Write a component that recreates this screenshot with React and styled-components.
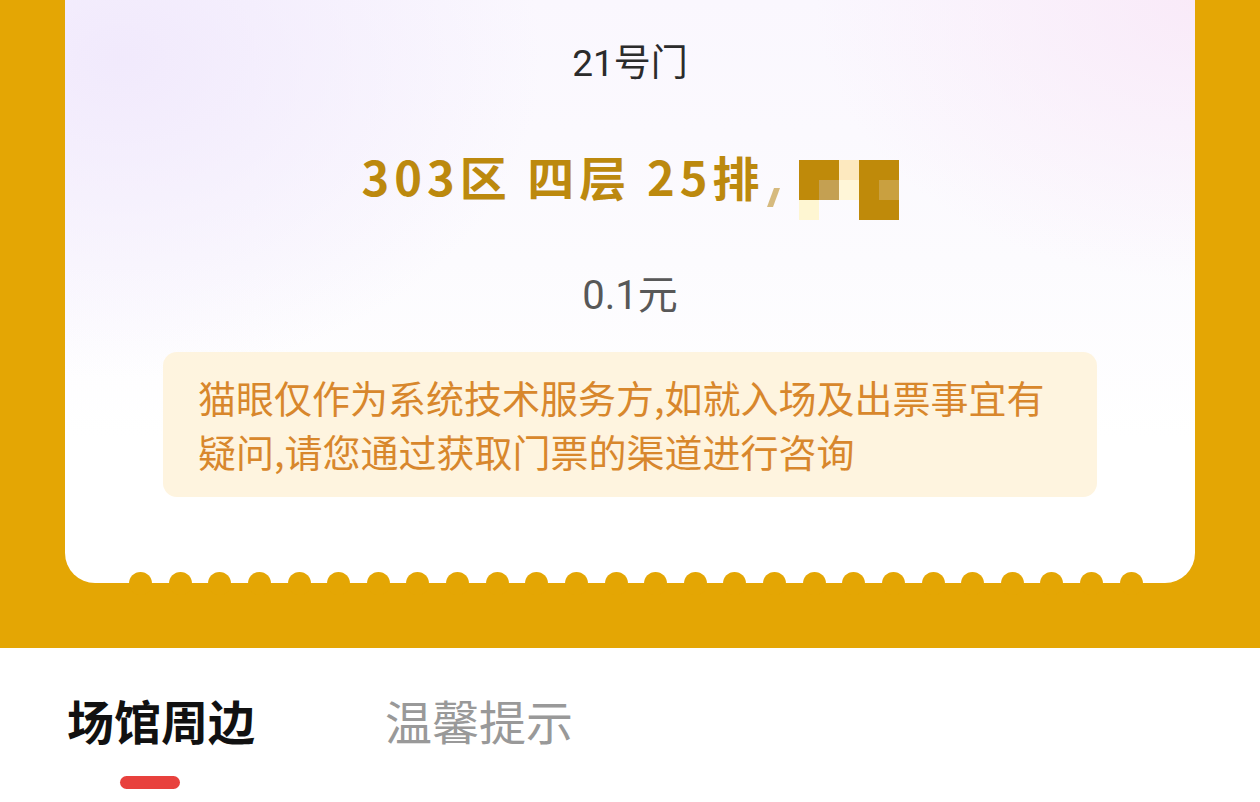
import React from "react";
import styled, { createGlobalStyle } from "styled-components";

const Global = createGlobalStyle`
  html, body { margin: 0; padding: 0; background: #fff; overflow: hidden; }
  body { font-family: "Noto Sans CJK SC", "Noto Sans", sans-serif; }
`;

const Page = styled.div`
  width: 1260px;
  height: 802px;
  display: flex;
  flex-direction: column;
  background: #fff;
`;

const GoldSection = styled.section`
  height: 648px;
  background: #e4a604;
  padding: 0 65px;
  box-sizing: border-box;
`;

const Card = styled.div`
  position: relative;
  height: 583px;
  border-radius: 0 0 30px 30px;
  background:
    radial-gradient(ellipse 420px 320px at 5% 10%, rgba(240, 232, 252, 0.9), rgba(255, 255, 255, 0) 100%),
    radial-gradient(ellipse 380px 280px at 100% 0%, rgba(249, 233, 248, 0.9), rgba(255, 255, 255, 0) 100%),
    linear-gradient(180deg, #faf7fe 0%, #fcfbfe 45%, #ffffff 75%);
  display: flex;
  flex-direction: column;
  align-items: center;
  box-sizing: border-box;
  padding-top: 41px;
`;

const Gate = styled.div`
  font-family: Roboto, "Noto Sans CJK SC", sans-serif;
  font-size: 37px;
  line-height: 46px;
  color: #2b2b2b;
`;

const SeatRow = styled.div`
  margin-top: 66px;
  display: flex;
  align-items: flex-start;
  height: 67px;
`;

const SeatText = styled.div`
  font-size: 47px;
  font-weight: 700;
  line-height: 46px;
  color: #bc890e;
  letter-spacing: 5px;
  white-space: pre;
`;

const Mosaic = styled.svg`
  display: block;
  flex: none;
  margin-top: 7px;
  margin-left: -4px;
`;

const Price = styled.div`
  margin-top: 52px;
  font-family: Roboto, "Noto Sans CJK SC", sans-serif;
  font-size: 40px;
  line-height: 48px;
  color: #585858;
`;

const Notice = styled.div`
  margin-top: 32px;
  width: 934px;
  box-sizing: border-box;
  background: #fef4df;
  border-radius: 14px;
  padding: 18px 35px 19px;
  font-size: 38px;
  line-height: 54px;
  color: #d8872c;
`;

const ScallopRow = styled.div`
  position: absolute;
  left: 64px;
  right: 52px;
  bottom: -12px;
  display: flex;
  justify-content: space-between;
`;

const Scallop = styled.span`
  width: 23px;
  height: 23px;
  border-radius: 50%;
  background: #e4a604;
`;

const TabBar = styled.nav`
  display: flex;
  gap: 130px;
  padding: 45px 0 0 67px;
`;

const Tab = styled.div`
  position: relative;
  font-size: 47px;
  line-height: 54px;
  font-weight: ${(p) => (p.$active ? 700 : 400)};
  color: ${(p) => (p.$active ? "#111" : "#999")};
`;

const Indicator = styled.span`
  position: absolute;
  left: 53px;
  top: 83px;
  width: 60px;
  height: 13px;
  border-radius: 7px;
  background: #e8413d;
`;

function SeatMosaic() {
  const gold = "#bf8a0a";
  return (
    <Mosaic width="138" height="60" viewBox="0 0 138 60">
      <polygon points="6,47 13,28 19,28 12,47" fill="#d6ba7e" />
      <rect x="38" y="0" width="40" height="20" fill={gold} />
      <rect x="78" y="0" width="20" height="20" fill="#fde9bf" />
      <rect x="98" y="0" width="40" height="20" fill={gold} />
      <rect x="38" y="20" width="20" height="20" fill={gold} />
      <rect x="58" y="20" width="20" height="20" fill="#c4a052" />
      <rect x="78" y="20" width="20" height="20" fill="#fff6d8" />
      <rect x="98" y="20" width="20" height="20" fill={gold} />
      <rect x="118" y="20" width="20" height="20" fill="#c9a040" />
      <rect x="38" y="40" width="20" height="20" fill="#fef6d2" />
      <rect x="98" y="40" width="40" height="20" fill={gold} />
    </Mosaic>
  );
}

export default function App() {
  return (
    <Page>
      <Global />
      <GoldSection>
        <Card>
          <Gate>21号门</Gate>
          <SeatRow>
            <SeatText>303区 四层 25排</SeatText>
            <SeatMosaic />
          </SeatRow>
          <Price>0.1元</Price>
          <Notice>
            猫眼仅作为系统技术服务方,如就入场及出票事宜有疑问,请您通过获取门票的渠道进行咨询
          </Notice>
          <ScallopRow>
            {Array.from({ length: 26 }).map((_, i) => (
              <Scallop key={i} />
            ))}
          </ScallopRow>
        </Card>
      </GoldSection>
      <TabBar>
        <Tab $active>
          场馆周边
          <Indicator />
        </Tab>
        <Tab>温馨提示</Tab>
      </TabBar>
    </Page>
  );
}
